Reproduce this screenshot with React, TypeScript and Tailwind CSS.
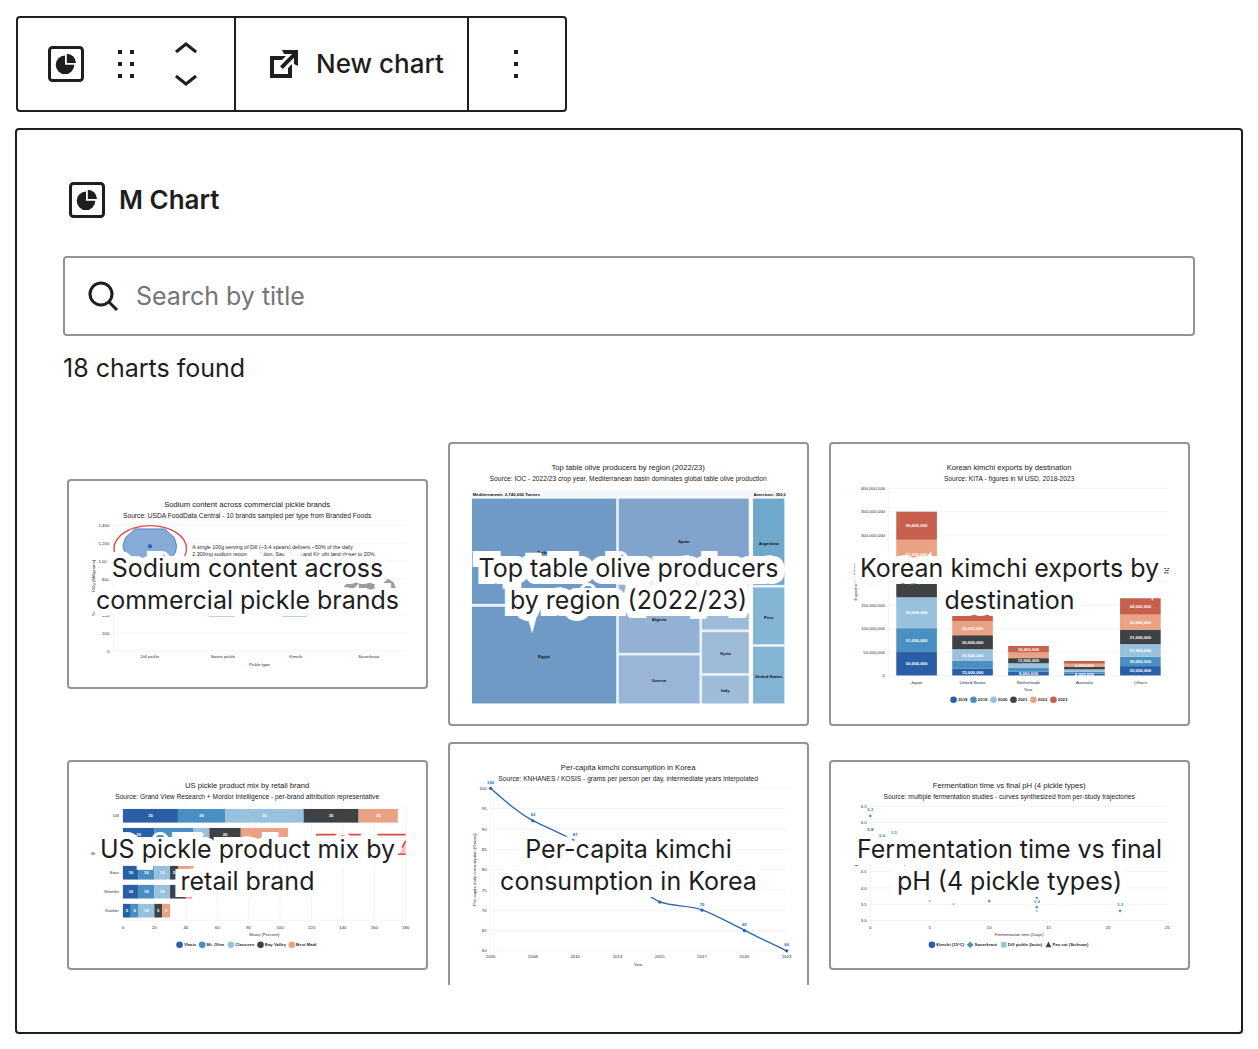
import type { ReactNode } from "react";

const COLORS = ["#2a5fa8", "#4a8fc1", "#98c1dd", "#3f4244", "#e9a283", "#c6604c"];
const GRID = "#ededed";
const INK = "#2b2b2b";

const BlockIcon = () => (
  <svg className="size-9" viewBox="0 0 36 36" fill="#1e1e1e" aria-hidden="true">
    <rect x="1.5" y="1.5" width="33" height="33" rx="3" fill="none" stroke="#1e1e1e" strokeWidth="3" />
    <path d="M17 18.8V9.5a9.3 9.3 0 1 0 9.3 9.3z" />
    <path d="M18.8 17V7.8a9.2 9.2 0 0 1 9.2 9.2z" />
  </svg>
);

const Dots = ({ columns }: { columns: number[] }) => (
  <svg className="size-12" viewBox="0 0 48 48" fill="#1e1e1e" aria-hidden="true">
    {columns.map((x) => [10, 22, 34].map((y) => <rect key={`${x}-${y}`} x={x} y={y} width="4" height="4" />))}
  </svg>
);

type LabelProps = {
  x: number;
  y: number;
  children: ReactNode;
  anchor?: "start" | "middle" | "end";
  fill?: string;
  bold?: boolean;
  size?: number;
};

const Label = ({ x, y, children, anchor = "middle", fill = INK, bold = false, size = 13 }: LabelProps) => (
  <text x={x} y={y} textAnchor={anchor} fill={fill} fontSize={size} fontWeight={bold ? 700 : 400}>
    {children}
  </text>
);

const AxisTitle = ({ x, y, children }: { x: number; y: number; children: ReactNode }) => (
  <text transform={`translate(${x} ${y}) rotate(-90)`} textAnchor="middle" fill={INK} fontSize="13">
    {children}
  </text>
);

type ChartProps = { height: number; title: string; subtitle: string; children: ReactNode };

const Chart = ({ height, title, subtitle, children }: ChartProps) => (
  <svg
    className="block h-auto w-full font-['Liberation_Sans',Arial,sans-serif]"
    viewBox={`0 0 1072 ${height}`}
    aria-hidden="true"
  >
    {children}
    <Label x={535} y={77} size={23} fill="#1a1a1a">{title}</Label>
    <Label x={535} y={111} size={20} fill="#1a1a1a">{subtitle}</Label>
  </svg>
);

const SodiumChart = () => (
  <Chart
    height={620}
    title="Sodium content across commercial pickle brands"
    subtitle="Source: USDA FoodData Central - 10 brands sampled per type from Branded Foods"
  >
    {["1,400", "1,200", "1,000", "800", "600", "400", "200", "0"].map((tick, i) => (
      <g key={tick}>
        <line x1="133" x2="1011" y1={132 + i * 54} y2={132 + i * 54} stroke={GRID} strokeWidth="2" />
        <Label x={121} y={137 + i * 54} anchor="end">{tick}</Label>
      </g>
    ))}
    <line x1="133" x2="133" y1="132" y2="510" stroke={GRID} strokeWidth="2" />
    <path d="M199 144h88l14 12 15 14 7 24-3 20-22 30h-110l-21-30-5-20 8-24 15-14z" fill="#86abd6" stroke="#4f82bd" strokeWidth="3" />
    <circle cx="243" cy="196" r="6" fill="#2a5fa8" />
    <ellipse cx="244" cy="203" rx="109" ry="69" fill="none" stroke="#dc4a45" strokeWidth="4" />
    <path d="M820 325l14-18q30-7 55-3 18-6 34 4h20l14-15 18 12 8 20-10 25H830z" fill="#9c9c9c" />
    <path d="M400 380h110l-12 28h-78z" fill="#9cc5e0" />
    <path d="M630 380h105l-22 28h-72z" fill="#9cc5e0" />
    <Label x={370} y={204} anchor="start" size={16}>
      A single 100g serving of Dill (~3-4 spears) delivers ~50% of the daily
    </Label>
    <Label x={370} y={224} anchor="start" size={16}>
      2,300mg sodium recommendation. Sauerkraut and Kimchi land closer to 20%.
    </Label>
    {["Dill pickle", "Sweet pickle", "Kimchi", "Sauerkraut"].map((name, i) => (
      <Label key={name} x={243 + i * 219} y={533}>{name}</Label>
    ))}
    <Label x={572} y={557}>Pickle type</Label>
    <AxisTitle x={77} y={321}>Sodium per 100g (Milligrams)</AxisTitle>
  </Chart>
);

// name, x, y, width, height, fill, label baseline
const TREE: [string, number, number, number, number, string, number][] = [
  ["Turkey", 66, 164, 433, 316, "#6e9ac5", 331],
  ["Egypt", 66, 489, 433, 290, "#6e9ac5", 642],
  ["Spain", 507, 164, 390, 251, "#80a4cc", 298],
  ["Algeria", 507, 423, 242, 204, "#93b0d5", 533],
  ["Greece", 507, 635, 242, 144, "#9ab6d7", 715],
  ["Morocco", 757, 423, 140, 134, "#9ebad9", 500],
  ["Syria", 757, 565, 140, 123, "#9ebad9", 635],
  ["Italy", 757, 696, 140, 83, "#9ebbda", 745],
  ["Argentina", 910, 164, 94, 259, "#6ea8ca", 302],
  ["Peru", 910, 431, 94, 170, "#84b4d4", 524],
  ["United States", 910, 609, 94, 170, "#84b4d4", 702],
];

const OliveChart = () => (
  <Chart
    height={840}
    title="Top table olive producers by region (2022/23)"
    subtitle="Source: IOC - 2022/23 crop year, Mediterranean basin dominates global table olive production"
  >
    <rect x="66" y="138" width="941" height="26" fill="#f5f8fb" />
    <rect x="66" y="164" width="831" height="615" fill="#e9f0f7" />
    <rect x="910" y="164" width="94" height="615" fill="#e9f0f7" />
    {TREE.map(([name, x, y, w, h, fill, baseline]) => (
      <g key={name}>
        <rect x={x} y={y} width={w} height={h} fill={fill} />
        <Label x={x + w / 2} y={baseline} bold fill="#111111">{name}</Label>
      </g>
    ))}
    <Label x={68} y={156} anchor="start" bold fill="#111111">Mediterranean: 2,740,000 Tonnes</Label>
    <svg x="911" y="138" width="97" height="26">
      <Label x={0} y={18} anchor="start" bold fill="#111111">Americas: 350,000 Tonnes</Label>
    </svg>
  </Chart>
);

// millions of USD for 2018 to 2023; `shown` lists the years that carry a label
const EXPORTS = [
  { name: "Japan", values: [50, 51, 66, 62, 61, 60], shown: [0, 1, 2, 3, 4, 5] },
  { name: "United States", values: [15, 16, 25, 30, 30, 20], shown: [0, 2, 3, 4] },
  { name: "Netherlands", values: [8, 9, 9, 11, 12, 14], shown: [0, 3, 5] },
  { name: "Australia", values: [4, 4, 5, 6, 6, 6], shown: [0, 4] },
  { name: "Others", values: [20, 20, 27, 31, 32, 35], shown: [0, 1, 2, 3, 4, 5] },
];

const ExportsChart = () => (
  <Chart
    height={840}
    title="Korean kimchi exports by destination"
    subtitle="Source: KITA - figures in M USD, 2018-2023"
  >
    {[400, 350, 300, 250, 200, 150, 100, 50, 0].map((tick) => {
      const y = 695 - tick * 1.405;
      return (
        <g key={tick}>
          <line x1="172" x2="1010" y1={y} y2={y} stroke={GRID} strokeWidth="2" />
          <Label x={162} y={y + 5} anchor="end">{tick ? `${tick},000,000` : "0"}</Label>
        </g>
      );
    })}
    <line x1="172" x2="172" y1="133" y2="695" stroke={GRID} strokeWidth="2" />
    {EXPORTS.map(({ name, values, shown }, i) => {
      const x = 196 + i * 168;
      return (
        <g key={name}>
          {values.map((value, j) => {
            const base = values.slice(0, j).reduce((a, b) => a + b, 0);
            const top = 695 - (base + value) * 1.405;
            return <rect key={j} x={x} y={top} width="122" height={value * 1.405} fill={COLORS[j]} />;
          })}
          {shown.map((j) => {
            const base = values.slice(0, j).reduce((a, b) => a + b, 0);
            return (
              <Label key={j} x={x + 61} y={700 - (base + values[j] / 2) * 1.405} bold fill="#ffffff">
                {`${values[j]},000,000`}
              </Label>
            );
          })}
          <Label x={x + 61} y={720}>{name}</Label>
        </g>
      );
    })}
    <path d="M1000 374h6m4 0h6M1000 387h14M1004 380h10" stroke="#444444" strokeWidth="3" />
    <Label x={592} y={743}>Year</Label>
    {COLORS.map((color, i) => (
      <g key={color}>
        <circle cx={368 + i * 60} cy="768" r="10" fill={color} />
        <Label x={381 + i * 60} y={773} anchor="start" bold>{2018 + i}</Label>
      </g>
    ))}
    <AxisTitle x={78} y={414}>Export value (USD)</AxisTitle>
  </Chart>
);

const MIX = [
  { name: "Dill", values: [35, 30, 50, 35, 25] },
  { name: "Sweet", values: [20, 25, 10, 20, 30] },
  { name: "Bread & butter", values: [15, 15, 10, 5, 5] },
  { name: "Sour", values: [10, 10, 10, 5, 10] },
  { name: "Gherkin", values: [10, 10, 10, 10, 4] },
  { name: "Kosher", values: [5, 5, 10, 5, 5] },
];

const BRANDS: [string, number][] = [
  ["Vlasic", 332],
  ["Mt. Olive", 400],
  ["Claussen", 486],
  ["Bay Valley", 575],
  ["Best Maid", 669],
];

const MixChart = () => (
  <Chart
    height={620}
    title="US pickle product mix by retail brand"
    subtitle="Source: Grand View Research + Mordor Intelligence - per-brand attribution representative"
  >
    {[0, 20, 40, 60, 80, 100, 120, 140, 160, 180].map((tick) => (
      <g key={tick}>
        <line x1={162 + tick * 4.717} x2={162 + tick * 4.717} y1="131" y2="475" stroke={GRID} strokeWidth="2" />
        <Label x={162 + tick * 4.717} y={501}>{tick}</Label>
      </g>
    ))}
    <line x1="162" x2="1011" y1="475" y2="475" stroke={GRID} strokeWidth="2" />
    {MIX.map(({ name, values }, i) => (
      <g key={name}>
        <Label x={150} y={166 + i * 57} anchor="end">{name}</Label>
        {values.map((value, j) => {
          const start = 162 + values.slice(0, j).reduce((a, b) => a + b, 0) * 4.717;
          return (
            <g key={j}>
              <rect x={start} y={141 + i * 57} width={value * 4.717} height="41" fill={COLORS[j]} />
              <Label x={start + value * 2.358} y={166 + i * 57} bold fill="#ffffff">{value}</Label>
            </g>
          );
        })}
      </g>
    ))}
    <path d="M992 277l19-40v40z" fill="#f7bfc4" />
    <path d="M742 221l4-3h265M960 277h51M1000 257l11-20" fill="none" stroke="#dc4a45" strokeWidth="5" />
    <Label x={586} y={524}>Share (Percent)</Label>
    {BRANDS.map(([name, x], i) => (
      <g key={name}>
        <circle cx={x} cy="549" r="10" fill={COLORS[i]} />
        <Label x={x + 13} y={554} anchor="start" bold>{name}</Label>
      </g>
    ))}
  </Chart>
);

const CONSUMPTION = [
  { year: 2005, grams: 100 },
  { year: 2008, grams: 92 },
  { year: 2010, grams: 87 },
  { year: 2013, grams: 80 },
  { year: 2015, grams: 72 },
  { year: 2017, grams: 70 },
  { year: 2020, grams: 65 },
  { year: 2023, grams: 60 },
];

const ConsumptionChart = () => (
  <Chart
    height={729}
    title="Per-capita kimchi consumption in Korea"
    subtitle="Source: KNHANES / KOSIS - grams per person per day, intermediate years interpolated"
  >
    {[100, 95, 90, 85, 80, 75, 70, 65, 60].map((tick, i) => (
      <g key={tick}>
        <line x1="122" x2="1011" y1={133 + i * 61} y2={133 + i * 61} stroke={GRID} strokeWidth="2" />
        <Label x={110} y={138 + i * 61} anchor="end">{tick}</Label>
      </g>
    ))}
    <line x1="122" x2="122" y1="133" y2="621" stroke={GRID} strokeWidth="2" />
    <path
      d="M122 133C170 175 205 207 249 230C290 250 330 268 376 291C420 315 460 340 503 377C550 420 590 456 630 474C670 488 715 484 757 498C800 514 840 538 884 559C930 584 970 601 1011 621"
      fill="none"
      stroke="#2b67b0"
      strokeWidth="4"
    />
    {CONSUMPTION.map(({ year, grams }, i) => {
      const x = 122 + i * 127;
      const y = 133 + (100 - grams) * 12.2;
      return (
        <g key={year}>
          <circle cx={x} cy={y} r="5" fill="#2b67b0" />
          <Label x={x} y={y - 14} bold fill="#2b67b0">{grams}</Label>
          <Label x={x} y={644}>{year}</Label>
        </g>
      );
    })}
    <Label x={565} y={668}>Year</Label>
    <AxisTitle x={77} y={377}>Per-capita daily consumption (Grams)</AxisTitle>
  </Chart>
);

const PH_LABELS: [string, number, number][] = [
  ["6.2", 118, 147],
  ["5.8", 118, 206],
  ["5.4", 153, 225],
  ["5.5", 189, 216],
  ["3.4", 618, 422],
  ["3.3", 868, 432],
];

const FermentationChart = () => (
  <Chart
    height={620}
    title="Fermentation time vs final pH (4 pickle types)"
    subtitle="Source: multiple fermentation studies - curves synthesized from per-study trajectories"
  >
    {["6.5", "6.0", "5.5", "5.0", "4.5", "4.0", "3.5", "3.0"].map((tick, i) => (
      <g key={tick}>
        <line x1="118" x2="1011" y1={133 + i * 49} y2={133 + i * 49} stroke={GRID} strokeWidth="2" />
        <Label x={107} y={138 + i * 49} anchor="end">{tick}</Label>
      </g>
    ))}
    <line x1="118" x2="118" y1="133" y2="476" stroke={GRID} strokeWidth="2" />
    {[0, 5, 10, 15, 20, 25].map((day) => (
      <Label key={day} x={118 + day * 35.7} y={501}>{day}</Label>
    ))}
    {[[118, 162], [475, 418], [618, 436], [868, 447]].map(([x, y]) => (
      <path key={x} d={`M${x} ${y - 5}l5 5-5 5-5-5z`} fill={COLORS[1]} />
    ))}
    {[[296, 418], [368, 427], [618, 447]].map(([x, y]) => (
      <rect key={x} x={x - 3} y={y - 3} width="6" height="6" fill={COLORS[2]} />
    ))}
    <circle cx="224" cy="309" r="4" fill={COLORS[0]} />
    <path d="M618 403l4 7h-8z" fill={COLORS[3]} />
    {PH_LABELS.map(([text, x, y]) => (
      <Label key={text} x={x} y={y} bold fill={text === "5.8" ? COLORS[0] : COLORS[1]}>
        {text}
      </Label>
    ))}
    <Label x={565} y={524}>Fermentation time (Days)</Label>
    <circle cx="303" cy="549" r="10" fill={COLORS[0]} />
    <path d="M418 539l10 10-10 10-10-10z" fill={COLORS[1]} />
    <rect x="511" y="541" width="16" height="16" fill={COLORS[2]} />
    <path d="M653 539l9 17h-18z" fill={COLORS[3]} />
    <Label x={316} y={554} anchor="start" bold>Kimchi (15°C)</Label>
    <Label x={431} y={554} anchor="start" bold>Sauerkraut</Label>
    <Label x={531} y={554} anchor="start" bold>Dill pickle (lacto)</Label>
    <Label x={665} y={554} anchor="start" bold>Pao cai (Sichuan)</Label>
    <AxisTitle x={78} y={305}>pH</AxisTitle>
  </Chart>
);

const CHARTS = [
  { title: "Sodium content across commercial pickle brands", Preview: SodiumChart },
  { title: "Top table olive producers by region (2022/23)", Preview: OliveChart },
  { title: "Korean kimchi exports by destination", Preview: ExportsChart },
  { title: "US pickle product mix by retail brand", Preview: MixChart },
  { title: "Per-capita kimchi consumption in Korea", Preview: ConsumptionChart },
  { title: "Fermentation time vs final pH (4 pickle types)", Preview: FermentationChart },
];

const Toolbar = () => (
  <div
    role="toolbar"
    aria-label="Block tools"
    className="ml-px flex h-24 w-fit divide-x-2 divide-[#1e1e1e] rounded-sm border-2 border-[#1e1e1e]"
  >
    <div className="flex items-center px-[18px]">
      <button type="button" aria-label="M Chart" className="flex w-15 justify-center">
        <BlockIcon />
      </button>
      <button type="button" aria-label="Drag" className="flex w-15 justify-center">
        <Dots columns={[16, 28]} />
      </button>
      <div className="flex w-15 flex-col items-center gap-2">
        <button type="button" aria-label="Move up">
          <svg className="block h-6 w-12" viewBox="0 5 24 12" fill="#1e1e1e" aria-hidden="true">
            <path d="M6.5 12.4L12 8l5.5 4.4-.9 1.2L12 10l-4.5 3.6-1-1.2z" />
          </svg>
        </button>
        <button type="button" aria-label="Move down">
          <svg className="block h-6 w-12" viewBox="0 7 24 12" fill="#1e1e1e" aria-hidden="true">
            <path d="M17.5 11.6L12 16l-5.5-4.4.9-1.2L12 14l4.5-3.6 1 1.2z" />
          </svg>
        </button>
      </div>
    </div>
    <button type="button" className="flex items-center gap-3 pr-[23px] pl-7 text-[26px] font-medium">
      <svg className="size-10" viewBox="0 0 20 20" fill="#1e1e1e" aria-hidden="true">
        <path d="M9 3h8v8l-2-1V6.92l-5.6 5.59-1.41-1.41L14.08 5H10zm3 12v-3l2-2v7H3V6h8L9 8H5v7h7z" />
      </svg>
      New chart
    </button>
    <button type="button" aria-label="Options" className="flex items-center px-6">
      <Dots columns={[21]} />
    </button>
  </div>
);

const App = () => (
  <main className="min-h-screen bg-white p-[15px] pt-4 font-[Inter,sans-serif] text-[25px] leading-8 text-[#1e1e1e]">
    <Toolbar />
    <section className="mt-4 rounded-sm border-2 border-[#1e1e1e] p-[46px] pb-[47px]">
      <h2 className="flex items-center gap-2 text-[26px] font-semibold">
        <span className="flex size-12 items-center justify-center">
          <BlockIcon />
        </span>
        M Chart
      </h2>
      <label className="mt-8 flex h-20 items-center gap-4 rounded-sm border-2 border-[#949494] px-[23px]">
        <svg className="size-8 shrink-0" viewBox="0 0 32 32" fill="none" stroke="#1e1e1e" strokeWidth="3" aria-hidden="true">
          <circle cx="13" cy="14" r="11" />
          <path d="M20.5 21.500l8.500 8.500" />
        </svg>
        <input
          type="search"
          aria-label="Search by title"
          placeholder="Search by title"
          className="h-full min-w-0 flex-1 outline-none placeholder:text-[#757575]"
        />
      </label>
      <p className="mt-4">18 charts found</p>
      <div className="mt-[58px] max-h-[543px] overflow-y-auto pr-[5px] pl-1 [scrollbar-width:none]">
        <div className="grid grid-cols-3 items-center gap-x-5 gap-y-4">
          {CHARTS.map(({ title, Preview }) => (
            <button
              key={title}
              type="button"
              className="relative overflow-hidden rounded-sm border-2 border-[#949494] bg-white"
            >
              <Preview />
              <span className="absolute inset-0 flex items-center justify-center px-4 [paint-order:stroke_fill] [-webkit-text-stroke:14px_#fff]">
                {title}
              </span>
            </button>
          ))}
        </div>
      </div>
    </section>
  </main>
);

export default App;
